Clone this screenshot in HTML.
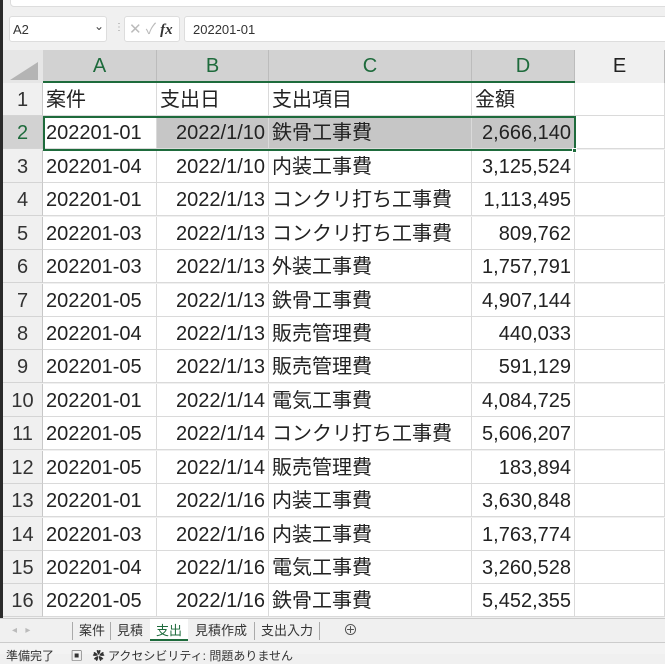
<!DOCTYPE html>
<html><head><meta charset="utf-8"><style>
*{margin:0;padding:0;box-sizing:border-box}
body{width:665px;height:654px;overflow:hidden;background:#f0f0f0;font-family:"Liberation Sans","Noto Sans CJK JP",sans-serif;position:relative}
.abs{position:absolute}
.cell{position:absolute;height:33px;line-height:35px;font-size:20px;color:#222;white-space:nowrap;overflow:hidden;border-right:1px solid #dadada;border-bottom:1px solid #dadada;background:#fff}
.rh{position:absolute;left:3px;width:40px;height:33px;line-height:35px;font-size:20px;color:#333;text-align:center;background:#f0f0f0;border-bottom:1px solid #d4d4d4;border-right:1px solid #c8c8c8}
.ch{position:absolute;top:50px;height:33px;line-height:33px;font-size:20px;color:#1e6b3c;text-align:center;background:#d2d2d2;border-right:1px solid #bcbcbc}
.tab{position:absolute;top:622px;font-size:13px;color:#333;height:18px;line-height:18px}
</style></head><body>
<div class="abs" style="left:0;top:0;width:3px;height:654px;background:#2a2a2a"></div>
<div class="abs" style="left:10px;top:-4px;width:660px;height:11px;background:#fff;border:1px solid #ddd;border-radius:4px"></div>
<div class="abs" style="left:9px;top:16px;width:98px;height:26px;background:#fff;border:1px solid #ddd;border-radius:3px;font-size:13px;line-height:26px;padding-left:3px;color:#333">A2</div>
<div class="abs" style="left:94px;top:19px;font-size:12px;color:#444">⌄</div>
<div class="abs" style="left:114px;top:22px;font-size:10px;color:#999">⋮</div>
<div class="abs" style="left:124px;top:16px;width:56px;height:26px;background:#fff;border:1px solid #ddd;border-radius:3px;font-size:15px;line-height:26px;color:#bbb;padding-left:4px">✕ ✓ <i style="color:#333;font-family:'Liberation Serif',serif;font-weight:bold">fx</i></div>
<div class="abs" style="left:184px;top:16px;width:490px;height:26px;background:#fff;border:1px solid #ddd;border-radius:3px;font-size:13px;line-height:26px;padding-left:8px;color:#333">202201-01</div>
<div class="abs" style="left:3px;top:50px;width:40px;height:33px;background:#e6e6e6"></div>
<div class="abs" style="left:10px;top:62px;width:0;height:0;border-left:28px solid transparent;border-bottom:18px solid #b4b4b4"></div>
<div class="ch" style="left:43px;width:114px">A</div>
<div class="ch" style="left:157px;width:112px">B</div>
<div class="ch" style="left:269px;width:203px">C</div>
<div class="ch" style="left:472px;width:103px">D</div>
<div class="ch" style="left:575px;width:90px;background:#f0f0f0;color:#222">E</div>
<div class="abs" style="left:43px;top:81px;width:532px;height:2px;background:#1e6b3c"></div>
<div id="g"></div>
<div class="abs" style="left:43px;top:116px;width:533px;height:35px;border:2px solid #1e6b3c"></div>
<div class="abs" style="left:572px;top:148px;width:5px;height:5px;background:#1e6b3c;border:1px solid #fff"></div>
<div class="abs" style="left:0;top:618px;width:665px;height:24px;background:#f0f0f0;border-top:1px solid #ccc"></div>
<div class="tab" style="left:12px;color:#bbb;font-size:10px">◂ &nbsp; ▸</div>
<div class="tab" style="left:72px;border-left:1px solid #aaa;padding:0 6px">案件</div>
<div class="tab" style="left:110px;border-left:1px solid #aaa;padding:0 6px">見積</div>
<div class="abs" style="left:150px;top:619px;width:38px;height:22px;background:#fff;border-bottom:2px solid #1e6b3c"></div>
<div class="tab" style="left:156px;color:#1e6b3c">支出</div>
<div class="tab" style="left:189px;padding:0 6px">見積作成</div>
<div class="tab" style="left:254px;border-left:1px solid #aaa;border-right:1px solid #aaa;padding:0 6px">支出入力</div>
<div class="tab" style="left:343px;font-size:15px;color:#555">⊕</div>
<div class="abs" style="left:0;top:642px;width:665px;height:12px;background:#f3f3f3;border-top:1px solid #ccc"></div>
<div class="abs" style="left:6px;top:647px;font-size:12px;color:#333">準備完了 &nbsp; &nbsp; ▣ &nbsp; ✿ アクセシビリティ: 問題ありません</div>
<script>
const d=[["案件","支出日","支出項目","金額"],
["202201-01","2022/1/10","鉄骨工事費","2,666,140"],
["202201-04","2022/1/10","内装工事費","3,125,524"],
["202201-01","2022/1/13","コンクリ打ち工事費","1,113,495"],
["202201-03","2022/1/13","コンクリ打ち工事費","809,762"],
["202201-03","2022/1/13","外装工事費","1,757,791"],
["202201-05","2022/1/13","鉄骨工事費","4,907,144"],
["202201-04","2022/1/13","販売管理費","440,033"],
["202201-05","2022/1/13","販売管理費","591,129"],
["202201-01","2022/1/14","電気工事費","4,084,725"],
["202201-05","2022/1/14","コンクリ打ち工事費","5,606,207"],
["202201-05","2022/1/14","販売管理費","183,894"],
["202201-01","2022/1/16","内装工事費","3,630,848"],
["202201-03","2022/1/16","内装工事費","1,763,774"],
["202201-04","2022/1/16","電気工事費","3,260,528"],
["202201-05","2022/1/16","鉄骨工事費","5,452,355"]];
const cols=[[43,114,"left"],[157,112,"right"],[269,203,"left"],[472,103,"right"]];
let h="";
for(let r=0;r<17;r++){const y=83+r*33.43;const sel=r==1;
h+=`<div class="rh" style="top:${y}px;${sel?'background:#d2d2d2;color:#1e6b3c':''}">${r+1}</div>`;
for(let c=0;c<4;c++){const [x,w,a]=cols[c];const t=r<16?d[r][c]:"";const al=r==0?"left":a;
h+=`<div class="cell" style="left:${x}px;top:${y}px;width:${w}px;text-align:${al};padding:0 3px;${sel&&c>0?'background:#c6c6c6':''}">${t}</div>`;}
h+=`<div class="cell" style="left:575px;top:${y}px;width:90px"></div>`;}
document.getElementById("g").innerHTML=h;
</script>
</body></html>
